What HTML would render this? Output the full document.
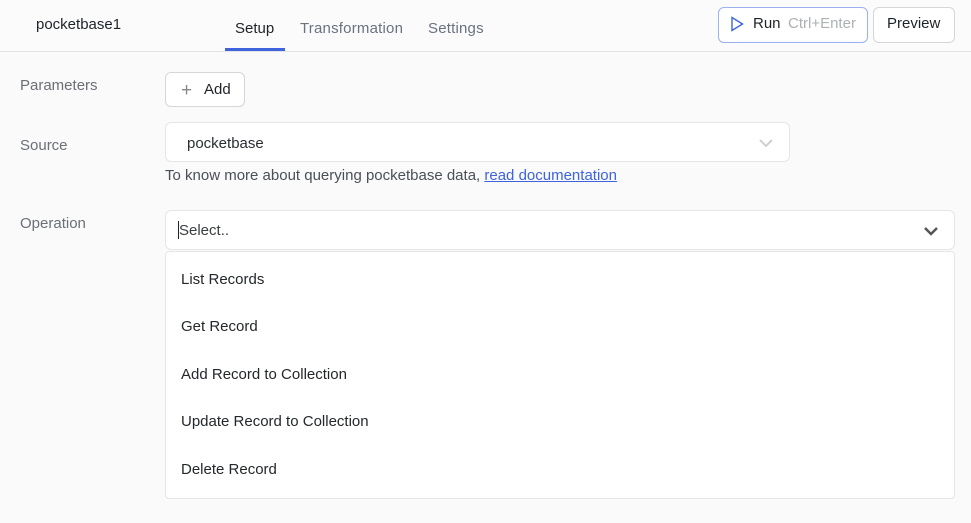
<!DOCTYPE html>
<html><head><style>
body{margin:0;width:971px;height:523px;background:#fafafa;font-family:"Liberation Sans",sans-serif;position:relative;overflow:hidden;color:#1f2328}
.a{position:absolute}
.hdr{left:0;top:0;width:971px;height:51px;background:#fbfbfb;border-bottom:1px solid #e4e4e7}
.t{font-size:15px}
.lab{color:#6b6f76;font-size:15px}
.box{background:#fff;border:1px solid #e6e6ea;border-radius:6px}
.item{left:181px;font-size:15px;color:#24272b}
</style></head><body>
<div class="a hdr"></div>
<div class="a t" style="left:36px;top:16px;font-size:15px;color:#1f2328">pocketbase1</div>
<div class="a t" style="left:235px;top:20px;font-size:15px;color:#1f2328">Setup</div>
<div class="a" style="left:225px;top:48px;width:60px;height:3px;background:#3e63dd"></div>
<div class="a t" style="left:300px;top:20px;font-size:15px;color:#6b7280;letter-spacing:0.2px">Transformation</div>
<div class="a t" style="left:428px;top:20px;font-size:15px;color:#6b7280;letter-spacing:0.2px">Settings</div>
<div class="a" style="left:718px;top:7px;width:148px;height:34px;border:1px solid #9bb0f0;border-radius:6px;background:#fff"></div>
<svg class="a" style="left:730px;top:16px" width="14" height="16"><path d="M2 1.5 L12.5 8 L2 14.5 Z" fill="none" stroke="#3e63dd" stroke-width="1.4"/></svg>
<div class="a t" style="left:753px;top:15px;font-size:15px">Run</div>
<div class="a t" style="left:788px;top:15px;font-size:15px;color:#adb0b6">Ctrl+Enter</div>
<div class="a" style="left:873px;top:7px;width:80px;height:34px;border:1px solid #d6d6da;border-radius:6px;background:#fff"></div>
<div class="a t" style="left:887px;top:15px;font-size:15px">Preview</div>

<div class="a lab" style="left:20px;top:77px">Parameters</div>
<div class="a box" style="left:165px;top:72px;width:78px;height:33px;border-color:#d6d6da"></div>
<div class="a" style="left:181px;top:80px;font-size:19px;color:#888;font-weight:300">+</div>
<div class="a t" style="left:204px;top:81px;font-size:15px">Add</div>

<div class="a lab" style="left:20px;top:137px">Source</div>
<div class="a box" style="left:165px;top:122px;width:623px;height:38px"></div>
<div class="a t" style="left:187px;top:135px;color:#2b2e33">pocketbase</div>
<svg class="a" style="left:758px;top:137px" width="16" height="12"><path d="M2 3 L8 9 L14 3" fill="none" stroke="#cfcfd3" stroke-width="2"/></svg>
<div class="a t" style="left:165px;top:167px;color:#4b4f56">To know more about querying pocketbase data, <span style="color:#3e63dd;text-decoration:underline">read documentation</span></div>

<div class="a lab" style="left:20px;top:215px">Operation</div>
<div class="a box" style="left:165px;top:210px;width:788px;height:38px"></div>
<div class="a" style="left:178px;top:221px;width:1px;height:18px;background:#222"></div>
<div class="a t" style="left:179px;top:222px;color:#3a3d42">Select..</div>
<svg class="a" style="left:922px;top:224px" width="18" height="14"><path d="M3 4 L9 10 L15 4" fill="none" stroke="#555" stroke-width="2.5"/></svg>
<div class="a box" style="left:165px;top:251px;width:788px;height:246px;border-radius:4px"></div>
<div class="a item" style="top:271px">List Records</div>
<div class="a item" style="top:318px">Get Record</div>
<div class="a item" style="top:366px">Add Record to Collection</div>
<div class="a item" style="top:413px">Update Record to Collection</div>
<div class="a item" style="top:461px">Delete Record</div>
</body></html>
